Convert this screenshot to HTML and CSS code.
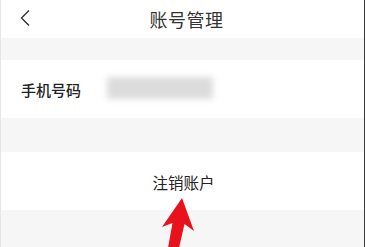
FILE: index.html
```html
<!DOCTYPE html>
<html lang="zh">
<head>
    <meta charset="UTF-8">
    <meta name="viewport" content="width=device-width, initial-scale=1.0">
    <title>账号管理</title>
    <link rel="stylesheet" href="styles.css">
</head>
<body>
    <div class="page">
        <div class="header">
            <svg class="back" width="12" height="18" viewBox="0 0 12 18">
                <path d="M10 1.5 L2.5 9 L10 16.5" fill="none" stroke="#333" stroke-width="1.4"/>
            </svg>
            <h1>账号管理</h1>
        </div>
        <div class="gap gap-small"></div>
        <div class="row">
            <span class="label">手机号码</span>
            <div class="masked"></div>
        </div>
        <div class="gap gap-mid"></div>
        <div class="row row-center">
            <span class="action">注销账户</span>
        </div>
        <div class="gap gap-end"></div>
        <svg class="arrow" width="365" height="247" viewBox="0 0 365 247">
            <polygon points="182,198 194,231 184.5,224 179,248 168,248 172.5,223 162,227" fill="#e8121c"/>
        </svg>
    </div>
</body>
</html>
```

FILE: styles.css
```css
body {
    margin: 0;
    font-family: "Noto Sans CJK SC", "Noto Sans", sans-serif;
    background-color: #ffffff;
}
.page {
    position: relative;
    width: 365px;
    height: 247px;
    overflow: hidden;
    box-sizing: border-box;
    border-left: 1px solid #e6e6e6;
    border-right: 1px solid #3c3c3c;
}
.header {
    position: relative;
    height: 38px;
    display: flex;
    align-items: center;
    justify-content: center;
}
.back {
    position: absolute;
    left: 18px;
    top: 9px;
}
h1 {
    margin: 0;
    font-size: 18px;
    font-weight: 400;
    color: #333333;
    letter-spacing: 0.5px;
    margin-left: 8px;
}
.gap {
    background-color: #f6f6f6;
}
.gap-small {
    height: 22px;
}
.gap-mid {
    height: 34px;
}
.gap-end {
    height: 37px;
}
.row {
    height: 58px;
    display: flex;
    align-items: center;
    padding-left: 20px;
}
.row-center {
    justify-content: center;
    padding-left: 2px;
}
.label {
    font-size: 15px;
    font-weight: 500;
    color: #222222;
    width: 86px;
}
.masked {
    width: 106px;
    height: 22px;
    background-color: #dcdcdc;
    filter: blur(3px);
    margin-top: -2px;
}
.action {
    font-size: 15.5px;
    color: #222222;
    margin-top: 1px;
}
.arrow {
    position: absolute;
    left: -1px;
    top: 0;
}
```
